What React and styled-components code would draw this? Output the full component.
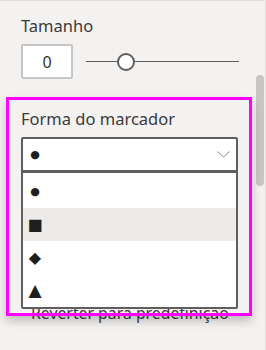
import React, { useState } from 'react';
import styled, { createGlobalStyle } from 'styled-components';

const GlobalStyle = createGlobalStyle`
	html, body {
		margin: 0;
		padding: 0;
		background: #f3f2f1;
	}
	* {
		box-sizing: border-box;
	}
`;

const shapes = [
	{ id: 'circle', glyph: '●', size: 11 },
	{ id: 'square', glyph: '■', size: 16 },
	{ id: 'diamond', glyph: '◆', size: 16 },
	{ id: 'triangle', glyph: '▲', size: 17 },
];

const Pane = styled.div`
	position: relative;
	width: 266px;
	height: 350px;
	overflow: hidden;
	background: #f3f2f1;
	border-top: 1px solid #e1dfdd;
	border-right: 1px solid #e1dfdd;
	padding: 14px 0 0 21px;
	font-family: 'Noto Sans', 'Open Sans', sans-serif;
	color: #323130;
`;

const ScrollThumb = styled.div`
	position: absolute;
	top: 74px;
	right: 1px;
	width: 8px;
	height: 111px;
	border-radius: 4px;
	background: #c8c6c4;
`;

const Label = styled.div`
	font-size: 16.5px;
	line-height: 22px;
	color: #3b3a39;
`;

const Row = styled.div`
	display: flex;
	align-items: center;
	gap: 13px;
	margin-top: 7px;
`;

const NumberBox = styled.div`
	width: 52px;
	height: 35px;
	background: #fff;
	border: 2px solid #c8c6c4;
	border-radius: 2px;
	display: flex;
	align-items: center;
	justify-content: center;
	font-size: 16px;
	color: #323130;
`;

const Slider = styled.div`
	display: flex;
	align-items: center;
	width: 153px;
`;

const Line = styled.div`
	flex: ${(p) => p.$grow};
	height: 1px;
	background: #605e5c;
`;

const Thumb = styled.div`
	flex: none;
	width: 18px;
	height: 18px;
	margin-top: 1px;
	border-radius: 50%;
	background: #fff;
	border: 2px solid #605e5c;
`;

const Section = styled.div`
	position: relative;
	margin-top: 29px;
	width: 217px;
`;

const Highlight = styled.div`
	position: absolute;
	left: -15px;
	top: -11px;
	width: 246px;
	height: 219px;
	border: 3px solid #ff00ff;
	box-shadow: 0 5px 9px rgba(0, 0, 0, 0.22);
	pointer-events: none;
	z-index: 3;
`;

const Select = styled.div`
	position: relative;
	margin-top: 7px;
	height: 35px;
	background: #fff;
	border: 2px solid #605e5c;
	border-radius: 2px 2px 0 0;
	display: flex;
	align-items: center;
	justify-content: space-between;
	padding: 0 6px 0 6px;
`;

const Glyph = styled.span`
	display: inline-flex;
	align-items: center;
	justify-content: center;
	width: 12px;
	height: 16px;
	font-family: 'DejaVu Sans', sans-serif;
	font-size: ${(p) => p.$size}px;
	line-height: 1;
	color: #201f1e;
`;

const Menu = styled.ul`
	position: absolute;
	left: -2px;
	top: 32px;
	width: 217px;
	margin: 0;
	padding: 2px 0 0;
	list-style: none;
	background: #fff;
	border: 2px solid #605e5c;
	border-radius: 0 0 2px 2px;
	z-index: 2;
`;

const Option = styled.li`
	height: 33px;
	display: flex;
	align-items: center;
	padding-left: 6px;
	background: ${(p) => (p.$hover ? '#edebe9' : '#fff')};
	cursor: pointer;
`;

const ResetLink = styled.div`
	margin-top: 131px;
	padding-left: 10px;
	font-size: 15.8px;
	line-height: 20px;
	color: #3b3a39;
`;

const App = () => {
	const [selected, setSelected] = useState('circle');
	const [hovered, setHovered] = useState('square');
	const current = shapes.find((s) => s.id === selected);

	return (
		<>
			<GlobalStyle />
			<Pane>
				<ScrollThumb />
				<Label>Tamanho</Label>
				<Row>
					<NumberBox>0</NumberBox>
					<Slider>
						<Line $grow={31} />
						<Thumb />
						<Line $grow={104} />
					</Slider>
				</Row>
				<Section>
					<Highlight />
					<Label>Forma do marcador</Label>
					<Select>
						<Glyph $size={current.size}>{current.glyph}</Glyph>
						<svg width='13' height='7' viewBox='0 0 13 7'>
							<path d='M0.5 0.5 L6.5 6 L12.5 0.5' fill='none' stroke='#8a8886' strokeWidth='1' />
						</svg>
						<Menu>
							{shapes.map((s) => (
								<Option
									key={s.id}
									$hover={hovered === s.id}
									onMouseEnter={() => setHovered(s.id)}
									onClick={() => setSelected(s.id)}
								>
									<Glyph $size={s.size}>{s.glyph}</Glyph>
								</Option>
							))}
						</Menu>
					</Select>
					<ResetLink>Reverter para predefinição</ResetLink>
				</Section>
			</Pane>
		</>
	);
};

export default App;
